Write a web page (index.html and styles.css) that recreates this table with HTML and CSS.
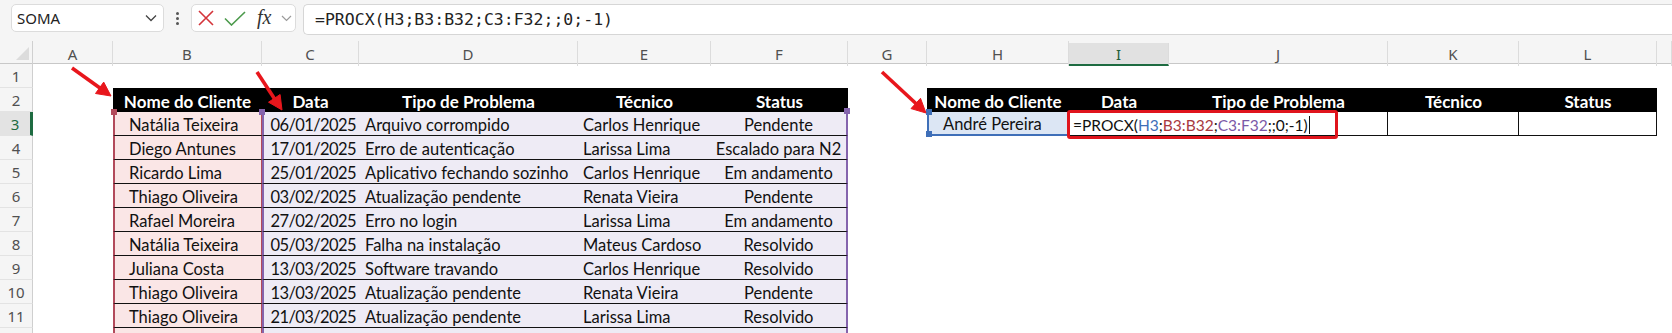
FILE: index.html
```html
<!DOCTYPE html>
<html lang="pt-BR">
<head>
<meta charset="utf-8">
<title>PROCX</title>
<link rel="stylesheet" href="styles.css">
</head>
<body>
<div class="app">
  <div class="fbar">
    <div class="namebox"><span>SOMA</span>
      <svg width="12" height="8" viewBox="0 0 12 8"><path d="M1 1.5 L6 6.5 L11 1.5" fill="none" stroke="#444" stroke-width="1.3"/></svg>
    </div>
    <div class="kebab"><i></i><i></i><i></i></div>
    <div class="fxbox">
      <svg class="ico-x" width="16" height="16" viewBox="0 0 16 16"><path d="M1 1 L15 15 M15 1 L1 15" stroke="#d4343a" stroke-width="1.6" fill="none"/></svg>
      <svg class="ico-ok" width="22" height="15" viewBox="0 0 22 15"><path d="M1 7.5 L7.5 14 L21 1" stroke="#4c9a4c" stroke-width="1.6" fill="none"/></svg>
      <span class="fx">fx</span>
      <svg class="ico-ch" width="11" height="7" viewBox="0 0 11 7"><path d="M1 1 L5.5 5.5 L10 1" fill="none" stroke="#9a9a9a" stroke-width="1.2"/></svg>
    </div>
    <div class="finput">=PROCX(H3;B3:B32;C3:F32;;0;-1)</div>
  </div>

  <div class="sheet">
    <div class="row colhdr">
      <div class="corner"><svg width="33" height="23" viewBox="0 0 33 23"><path d="M29 6 L29 19 L16 19 Z" fill="#dcdcdc"/></svg></div>
      <div class="ch">A</div><div class="ch">B</div><div class="ch">C</div><div class="ch">D</div>
      <div class="ch">E</div><div class="ch">F</div><div class="ch">G</div><div class="ch">H</div>
      <div class="ch sel">I</div><div class="ch">J</div><div class="ch">K</div><div class="ch">L</div><div class="ch"></div>
    </div>

    <div class="row"><div class="rh">1</div></div>

    <div class="row">
      <div class="rh">2</div>
      <div class="hd cB">Nome do Cliente</div><div class="hd cC">Data</div><div class="hd cD">Tipo de Problema</div><div class="hd cE">Técnico</div><div class="hd cF">Status</div>
      <div class="hd cH">Nome do Cliente</div><div class="hd cI">Data</div><div class="hd cJ">Tipo de Problema</div><div class="hd cK">Técnico</div><div class="hd cL">Status</div>
    </div>

    <div class="row">
      <div class="rh sel">3</div>
      <div class="d cB first"><b class="hdl hdl-b"></b>Natália Teixeira</div><div class="d cC first"><b class="hdl hdl-c"></b>06/01/2025</div><div class="d cD">Arquivo corrompido</div><div class="d cE">Carlos Henrique</div><div class="d cF first"><b class="hdl hdl-f"></b>Pendente</div>
      <div class="lk"><b class="hdl hdl-h1"></b><b class="hdl hdl-h2"></b>André Pereira</div>
      <div class="fcell"><span>=PROCX(</span><span class="r1">H3</span><span>;</span><span class="r2">B3:B32</span><span>;</span><span class="r3">C3:F32</span><span>;;0;-1)</span><i class="caret"></i></div>
      <div class="bx cK"></div><div class="bx cL"></div>
    </div>

    <div class="row">
      <div class="rh">4</div>
      <div class="d cB">Diego Antunes</div><div class="d cC">17/01/2025</div><div class="d cD">Erro de autenticação</div><div class="d cE">Larissa Lima</div><div class="d cF">Escalado para N2</div>
    </div>
    <div class="row">
      <div class="rh">5</div>
      <div class="d cB">Ricardo Lima</div><div class="d cC">25/01/2025</div><div class="d cD">Aplicativo fechando sozinho</div><div class="d cE">Carlos Henrique</div><div class="d cF">Em andamento</div>
    </div>
    <div class="row">
      <div class="rh">6</div>
      <div class="d cB">Thiago Oliveira</div><div class="d cC">03/02/2025</div><div class="d cD">Atualização pendente</div><div class="d cE">Renata Vieira</div><div class="d cF">Pendente</div>
    </div>
    <div class="row">
      <div class="rh">7</div>
      <div class="d cB">Rafael Moreira</div><div class="d cC">27/02/2025</div><div class="d cD">Erro no login</div><div class="d cE">Larissa Lima</div><div class="d cF">Em andamento</div>
    </div>
    <div class="row">
      <div class="rh">8</div>
      <div class="d cB">Natália Teixeira</div><div class="d cC">05/03/2025</div><div class="d cD">Falha na instalação</div><div class="d cE">Mateus Cardoso</div><div class="d cF">Resolvido</div>
    </div>
    <div class="row">
      <div class="rh">9</div>
      <div class="d cB">Juliana Costa</div><div class="d cC">13/03/2025</div><div class="d cD">Software travando</div><div class="d cE">Carlos Henrique</div><div class="d cF">Resolvido</div>
    </div>
    <div class="row">
      <div class="rh">10</div>
      <div class="d cB">Thiago Oliveira</div><div class="d cC">13/03/2025</div><div class="d cD">Atualização pendente</div><div class="d cE">Renata Vieira</div><div class="d cF">Pendente</div>
    </div>
    <div class="row">
      <div class="rh">11</div>
      <div class="d cB">Thiago Oliveira</div><div class="d cC">21/03/2025</div><div class="d cD">Atualização pendente</div><div class="d cE">Larissa Lima</div><div class="d cF">Resolvido</div>
    </div>
    <div class="row">
      <div class="rh"></div>
      <div class="d cB"></div><div class="d cC"></div><div class="d cD"></div><div class="d cE"></div><div class="d cF"></div>
    </div>
  </div>

  <svg class="arrows" width="1672" height="333" viewBox="0 0 1672 333">
    <g fill="#e8161c" stroke="#e8161c">
      <line x1="72" y1="68" x2="101" y2="88.8" stroke-width="3.6"/>
      <polygon points="111,96 95.5,93.5 103.7,82.1" stroke-width="1"/>
      <line x1="257" y1="72" x2="275" y2="99.5" stroke-width="3.6"/>
      <polygon points="282,110 268.5,102.2 280.1,94.5" stroke-width="1"/>
      <line x1="882" y1="72" x2="917" y2="104.5" stroke-width="3.6"/>
      <polygon points="926,113 911,108.6 920.5,98.3" stroke-width="1"/>
    </g>
  </svg>
  <div class="redbox"></div>
</div>
</body>
</html>
```

FILE: styles.css
```css
* { box-sizing: border-box; margin: 0; padding: 0; }
body { margin: 0; background: #fff; font-family: "Lato", "Liberation Sans", sans-serif; }
.app { position: relative; width: 1672px; height: 333px; overflow: hidden; background: #fff; }

/* formula bar */
.fbar { height: 41px; background: #f5f5f5; display: flex; align-items: flex-start; padding-top: 4px; font-family: "Noto Sans", sans-serif; }
.namebox { margin-left: 11px; width: 153px; height: 28px; background: #fff; border: 1px solid #dcdcdc; border-radius: 5px; display: flex; align-items: center; padding-left: 5px; padding-right: 6px; font-size: 15px; color: #222; }
.namebox span { flex: 1; }
.kebab { width: 27px; height: 28px; display: flex; flex-direction: column; align-items: center; justify-content: center; gap: 2px; }
.kebab i { width: 3px; height: 3px; border-radius: 50%; background: #555; display: block; }
.fxbox { width: 105px; height: 28px; background: #fff; border: 1px solid #dcdcdc; border-radius: 5px; display: flex; align-items: center; padding-left: 6px; }
.ico-x { margin-right: 10px; }
.ico-ok { margin-right: 11px; }
.fx { font-family: "Liberation Serif", "DejaVu Serif", serif; font-style: italic; font-size: 20px; color: #333; width: 22px; line-height: 1; margin-top: -2px; }
.ico-ch { margin-left: 2px; }
.finput { flex: 1; margin-left: 7px; height: 31px; background: #fff; border: 1px solid #d6d6d6; border-right: none; border-radius: 5px 0 0 5px; padding-left: 11px; display: flex; align-items: center; font-family: "DejaVu Sans Mono", monospace; font-size: 16.5px; color: #222; }

/* sheet grid */
.row { display: grid; grid-template-columns: 33px 80px 149px 97px 219px 133px 137px 79px 142px 100px 219px 131px 138px 15px; height: 24px; }
.colhdr { height: 23px; background: #f5f5f5; border-bottom: 1px solid #c8c8c8; }
.corner { border-right: 1px solid #d0d0d0; }
.corner svg { display: block; }
.ch { display: flex; align-items: center; justify-content: center; font-family: "Noto Sans", sans-serif; font-size: 15px; color: #505050; border-right: 1px solid #dcdcdc; padding-top: 1px; }
.ch.sel { background: #e1e1e1; border-bottom: 2px solid #1e6b41; color: #1e5c3a; margin-top: 2px; }

.rh { grid-column: 1; background: #f5f5f5; border-right: 1px solid #cfcfcf; border-bottom: 1px solid #e3e3e3; display: flex; align-items: center; justify-content: center; font-family: "Noto Sans", sans-serif; font-size: 15px; color: #505050; padding-top: 1px; }
.rh.sel { background: #e3e3e3; color: #1e6b41; border-right: 3px solid #1e6b41; }

.cB { grid-column: 3; } .cC { grid-column: 4; } .cD { grid-column: 5; } .cE { grid-column: 6; } .cF { grid-column: 7; }
.cH { grid-column: 9; } .cI { grid-column: 10; } .cJ { grid-column: 11; } .cK { grid-column: 12; } .cL { grid-column: 13; }

.hd { background: #000; color: #fff; font-weight: 700; font-size: 17px; display: flex; align-items: center; justify-content: center; padding-top: 2px; white-space: nowrap; }

.d { position: relative; font-size: 16.5px; color: #111; display: flex; align-items: center; padding-top: 2px; white-space: nowrap; border-bottom: 1px solid #111; background: #eeebf5; }
.d.cB { background: #fae6e6; border-left: 2px solid #b24a5b; border-right: 1px solid #b24a5b; padding-left: 14px; }
.d.cC { border-left: 2px solid #8564ad; justify-content: flex-end; padding-right: 3px; letter-spacing: -0.6px; }
.d.cD { padding-left: 6px; }
.d.cE { padding-left: 5px; }
.d.cF { justify-content: center; border-right: 2px solid #8564ad; }

.hdl { position: absolute; width: 6px; height: 6px; display: block; }
.hdl-b { left: -4px; top: -3px; background: #b24a5b; }
.hdl-c { left: -5px; top: -3px; background: #8564ad; }
.hdl-f { right: -4px; top: -4px; background: #8564ad; }
.hdl-h1 { left: -3px; top: -3px; background: #3f6fb8; }
.hdl-h2 { left: -3px; bottom: -3px; background: #3f6fb8; }

.lk { grid-column: 9; position: relative; background: #dce6f4; border-left: 2px solid #3f6fb8; border-bottom: 2px solid #3f6fb8; font-size: 16.5px; color: #111; display: flex; align-items: center; padding-left: 14px; padding-top: 2px; white-space: nowrap; }
.fcell { grid-column: 10 / span 2; background: #fff; border-bottom: 1px solid #111; border-right: 1px solid #111; font-size: 15.5px; color: #111; display: flex; align-items: center; padding-left: 4px; padding-top: 2px; white-space: nowrap; }
.r1 { color: #3f6fb8; }
.r2 { color: #a8393f; }
.r3 { color: #7b5aa8; }
.caret { display: block; width: 1px; height: 18px; background: #111; margin-left: 1px; }
.bx { border-bottom: 1px solid #111; border-right: 1px solid #111; }

.arrows { position: absolute; left: 0; top: 0; pointer-events: none; }
.redbox { position: absolute; left: 1067px; top: 110px; width: 271px; height: 29px; border: 3px solid #e0141c; border-radius: 3px; }
```
